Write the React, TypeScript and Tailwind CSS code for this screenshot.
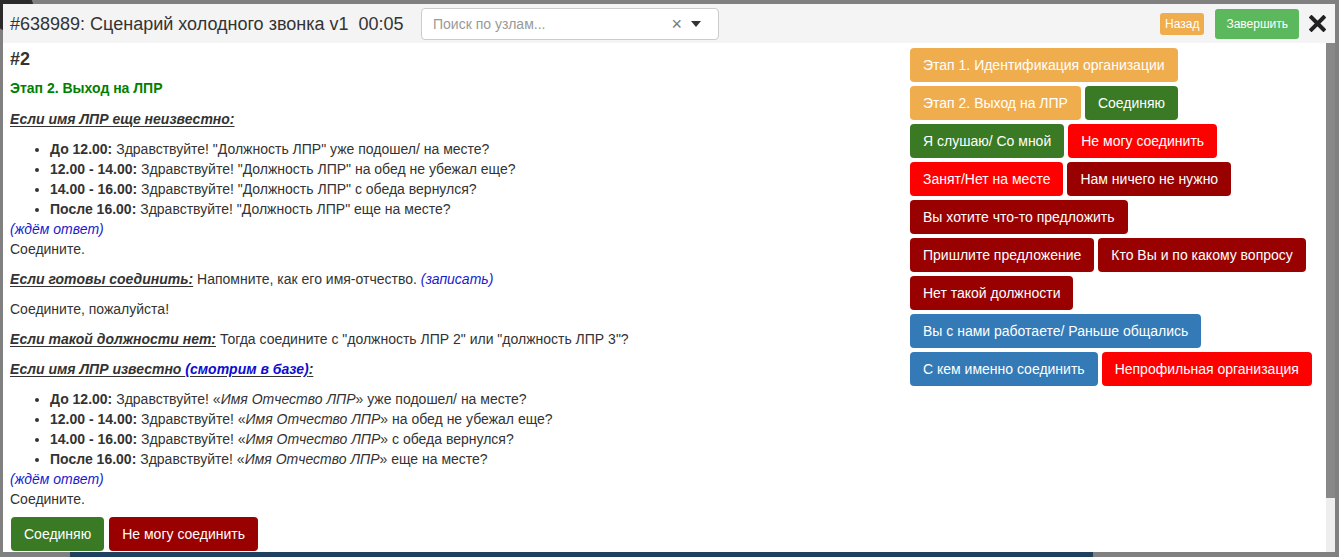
import type { ReactNode } from "react";

type Tone = "orange" | "green" | "red" | "darkred" | "blue";

const TONE: Record<Tone, string> = {
  orange: "bg-[#f0ad4e]",
  green: "bg-[#3a7a24]",
  red: "bg-[#ff0000]",
  darkred: "bg-[#990000]",
  blue: "bg-[#337ab7]",
};

const ROWS: { label: string; tone: Tone }[][] = [
  [{ label: "Этап 1. Идентификация организации", tone: "orange" }],
  [
    { label: "Этап 2. Выход на ЛПР", tone: "orange" },
    { label: "Соединяю", tone: "green" },
  ],
  [
    { label: "Я слушаю/ Со мной", tone: "green" },
    { label: "Не могу соединить", tone: "red" },
  ],
  [
    { label: "Занят/Нет на месте", tone: "red" },
    { label: "Нам ничего не нужно", tone: "darkred" },
  ],
  [{ label: "Вы хотите что-то предложить", tone: "darkred" }],
  [
    { label: "Пришлите предложение", tone: "darkred" },
    { label: "Кто Вы и по какому вопросу", tone: "darkred" },
  ],
  [{ label: "Нет такой должности", tone: "darkred" }],
  [{ label: "Вы с нами работаете/ Раньше общались", tone: "blue" }],
  [
    { label: "С кем именно соединить", tone: "blue" },
    { label: "Непрофильная организация", tone: "red" },
  ],
];

function Btn({ tone, children }: { tone: Tone; children: ReactNode }) {
  return (
    <button
      className={`${TONE[tone]} h-[34px] px-[13px] rounded-[4px] text-white text-[14px] leading-5 whitespace-nowrap`}
    >
      {children}
    </button>
  );
}

function Wait() {
  return <i className="text-[#1a1acd]">(ждём ответ)</i>;
}

function Lead({ children }: { children: ReactNode }) {
  return <b className="italic underline underline-offset-2">{children}</b>;
}

function ScheduleList({ who }: { who: ReactNode }) {
  const slots: [string, string][] = [
    ["До 12.00:", "уже подошел/ на месте?"],
    ["12.00 - 14.00:", "на обед не убежал еще?"],
    ["14.00 - 16.00:", "с обеда вернулся?"],
    ["После 16.00:", "еще на месте?"],
  ];
  return (
    <ul className="list-disc pl-[40px] mt-[10px]">
      {slots.map(([t, rest]) => (
        <li key={t} className="h-5">
          <b>{t}</b> Здравствуйте! {who} {rest}
        </li>
      ))}
    </ul>
  );
}

export default function App() {
  return (
    <div
      className="relative h-[557px] w-full overflow-hidden bg-[#808080] pt-[4px] text-[#333] text-[14px] leading-5"
      style={{ fontFamily: '"Liberation Sans", Arial, sans-serif' }}
    >
      {/* avatar peeking behind the modal */}
      <div className="absolute -left-[10px] -top-[12px] h-[44px] w-[44px] rounded-full bg-[#2b2b2b]" />

      <div className="relative ml-[3px] flex h-[548px] w-[1332px] flex-col">
        <header className="flex h-[39px] items-center bg-[#f4f4f4] pl-[7px] pr-[9px]">
          <div className="w-[411px] text-[18px] whitespace-pre text-[#333]">
            #638989: Сценарий холодного звонка v1  00:05
          </div>
          <div className="flex h-[32px] w-[298px] items-center rounded-[4px] border border-[#ccc] bg-white pl-[11px] pr-[17px]">
            <span className="flex-1 text-[14px] text-[#999]">Поиск по узлам...</span>
            <span className="text-[18px] leading-none text-[#777]">×</span>
            <svg className="ml-[9px]" width="10" height="6" viewBox="0 0 10 6">
              <path d="M0 0h10L5 6z" fill="#333" />
            </svg>
          </div>
          <div className="flex-1" />
          <button className="h-[22px] rounded-[3px] bg-[#f0ad4e] px-[5px] text-[12px] text-white">
            Назад
          </button>
          <button className="ml-[11px] h-[30px] rounded-[3px] bg-[#5cb85c] px-[11px] text-[12px] text-white">
            Завершить
          </button>
          <svg className="ml-[10px]" width="17" height="17" viewBox="0 0 17 17">
            <path d="M2.5 2.5l12 12M14.5 2.5l-12 12" stroke="#222" strokeWidth="4" strokeLinecap="square" />
          </svg>
        </header>

        <div className="flex min-h-0 flex-1">
          <div className="flex flex-1 bg-white">
            <section className="w-[907px] shrink-0 pl-[7px]">
              <div className="mt-[6px] text-[18px] font-bold">#2</div>
              <div className="mt-[9px] text-[14px] font-bold text-[#008000]">Этап 2. Выход на ЛПР</div>

              <p className="mt-[11px]">
                <Lead>Если имя ЛПР еще неизвестно:</Lead>
              </p>
              <ScheduleList who={<>"Должность ЛПР"</>} />
              <Wait />
              <div>Соедините.</div>

              <p className="mt-[10px]">
                <Lead>Если готовы соединить:</Lead> Напомните, как его имя-отчество.{" "}
                <i className="text-[#1a1acd]">(записать)</i>
              </p>
              <p className="mt-[10px]">Соедините, пожалуйста!</p>
              <p className="mt-[10px]">
                <Lead>Если такой должности нет:</Lead> Тогда соедините с "должность ЛПР 2" или "должность ЛПР 3"?
              </p>
              <p className="mt-[10px]">
                <Lead>
                  Если имя ЛПР известно <span className="text-[#0c0cd2]">(смотрим в базе)</span>:
                </Lead>
              </p>
              <ScheduleList
                who={
                  <>
                    «<i>Имя Отчество ЛПР</i>»
                  </>
                }
              />
              <Wait />
              <div>Соедините.</div>

              <div className="mt-[8px] flex gap-[5px] pl-[1px]">
                <Btn tone="green">Соединяю</Btn>
                <Btn tone="darkred">Не могу соединить</Btn>
              </div>
            </section>

            <aside className="flex flex-col gap-[4px] pt-[5px]">
              {ROWS.map((row, i) => (
                <div key={i} className="flex gap-[4px]">
                  {row.map((b) => (
                    <Btn key={b.label} tone={b.tone}>
                      {b.label}
                    </Btn>
                  ))}
                </div>
              ))}
            </aside>
          </div>

          <div className="flex w-[9px] flex-col">
            <div className="h-[455px] bg-[#888]" />
            <div className="flex-1 bg-[#eeeeee]" />
          </div>
        </div>
      </div>

      <div className="ml-[70px] h-[5px] w-[1023px] bg-[#1f3f5f]" />
    </div>
  );
}
